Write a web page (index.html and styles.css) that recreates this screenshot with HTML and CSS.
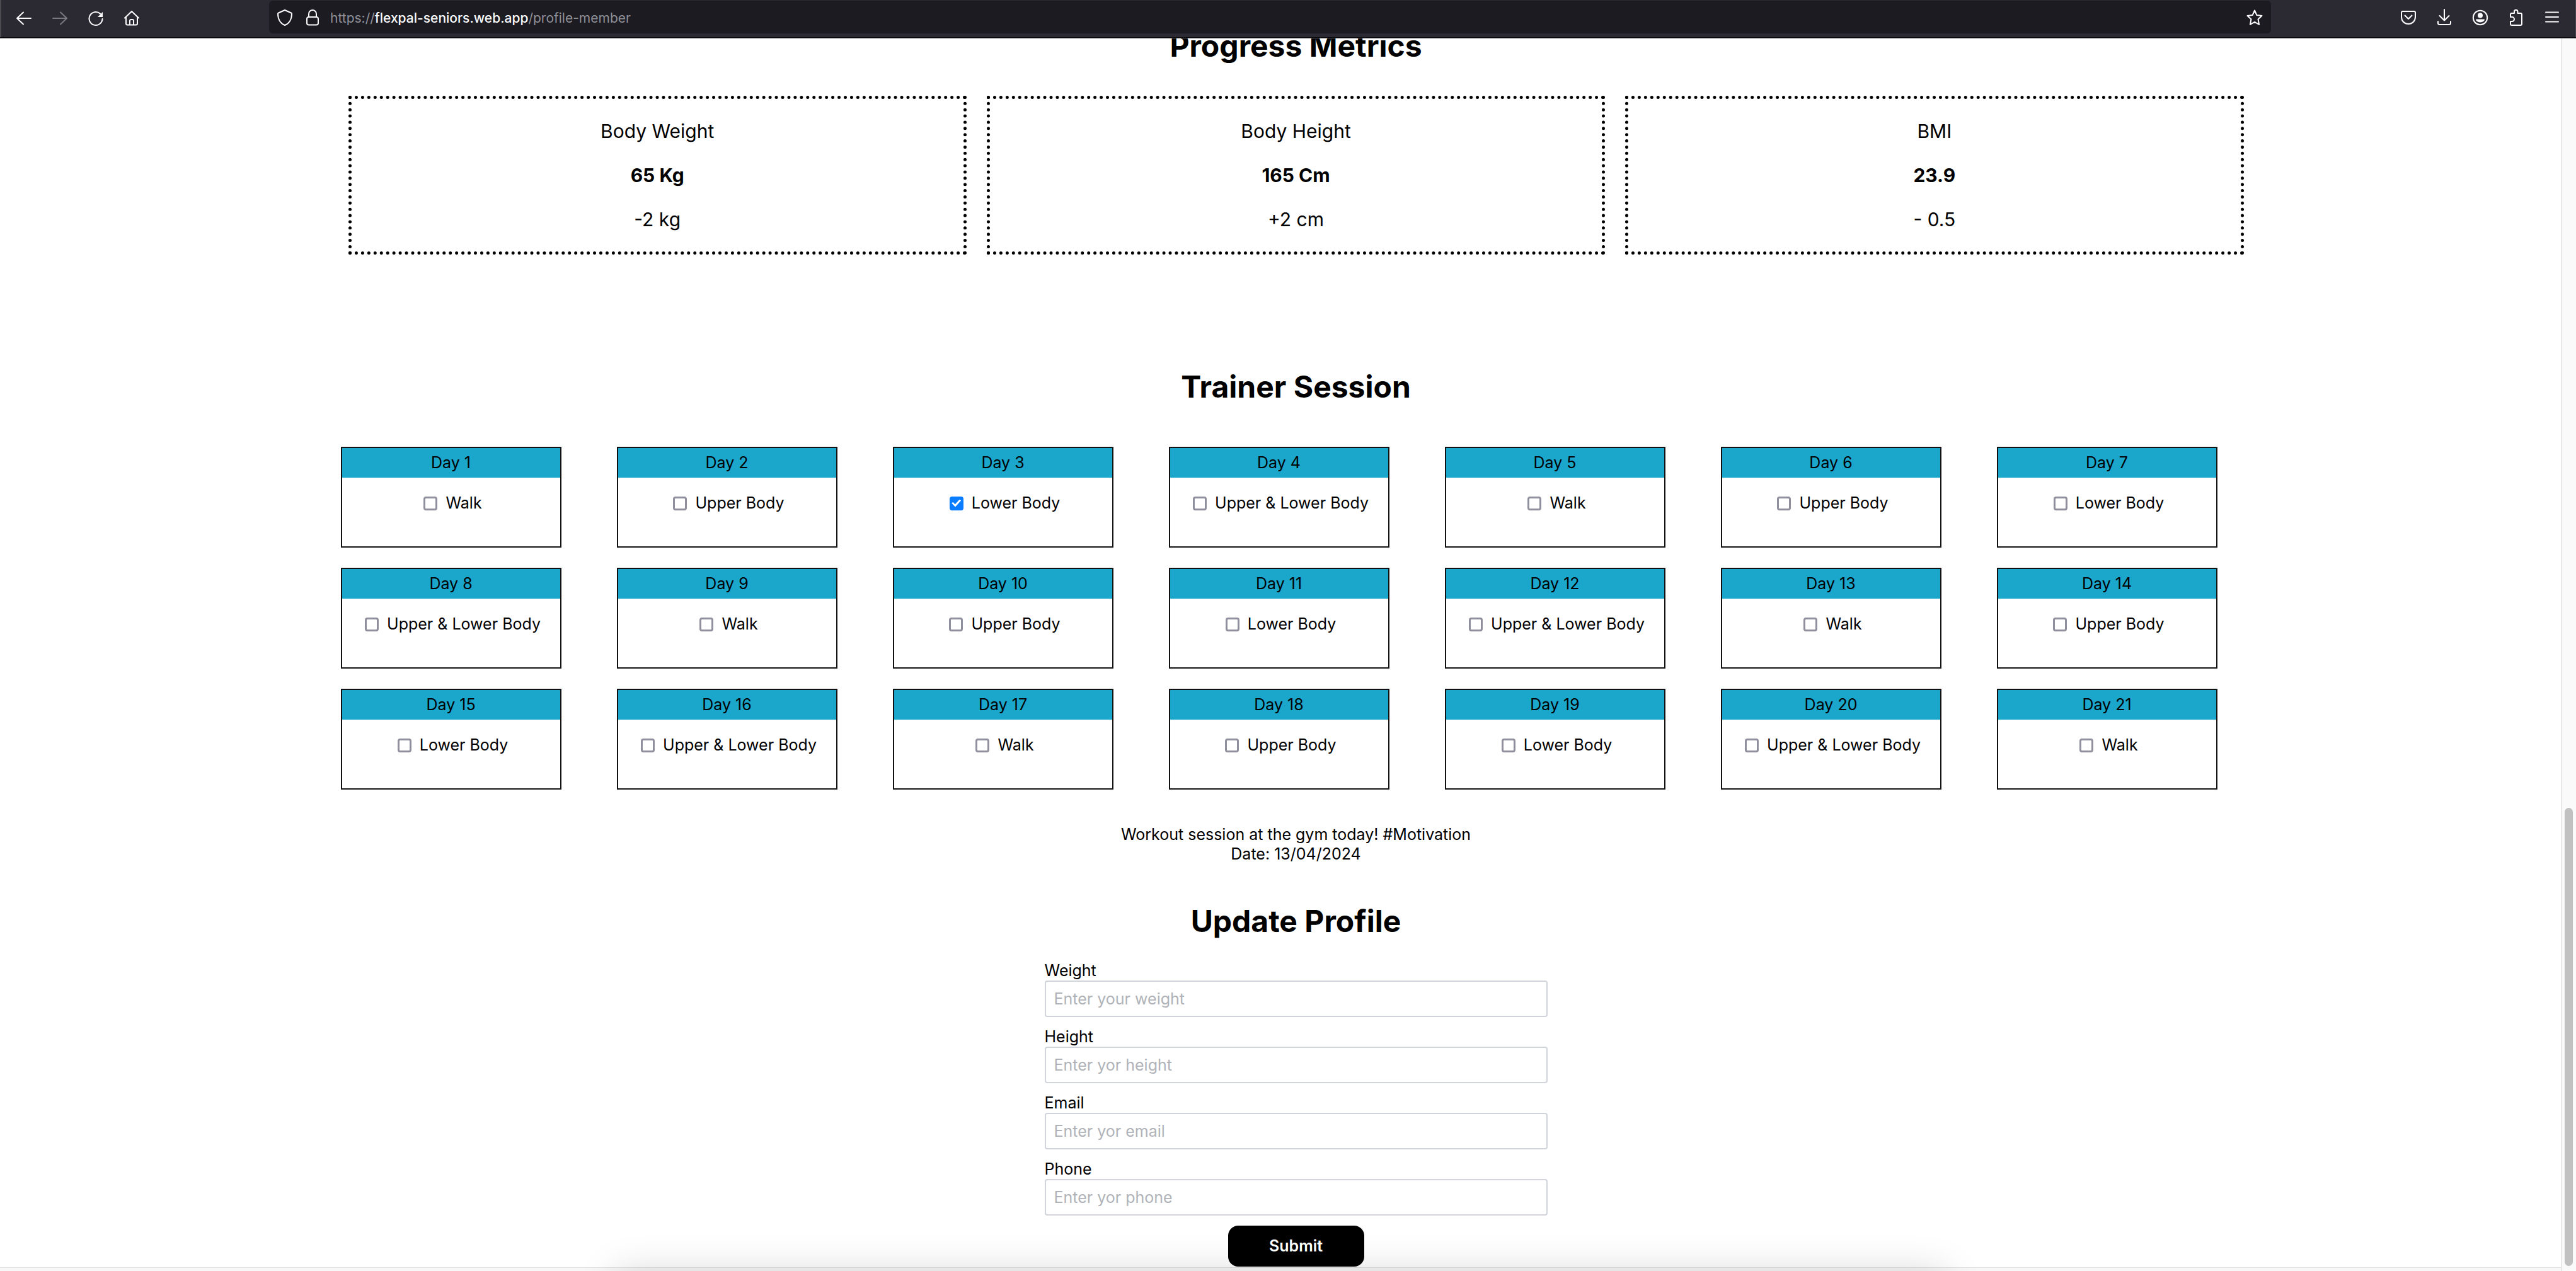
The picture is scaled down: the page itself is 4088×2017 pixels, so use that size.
FILE: index.html
```html
<!DOCTYPE html>
<html lang="en">
<head>
<meta charset="utf-8">
<title>FlexPal Seniors</title>
<link rel="stylesheet" href="styles.css">
</head>
<body>
<div class="browser">
  <header class="toolbar">
    <nav class="toolbar-nav" aria-label="Browser">
      <button class="tool" type="button" aria-label="Back"><svg class="icon" viewBox="0 0 32 32"><path d="M27 16H5M15 6.500L5 16l10 9.500"/></svg></button>
      <button class="tool tool-off" type="button" aria-label="Forward" disabled><svg class="icon" viewBox="0 0 32 32"><path d="M5 16h22M17 6.500L27 16l-10 9.500"/></svg></button>
      <button class="tool" type="button" aria-label="Reload"><svg class="icon" viewBox="0 0 32 32"><path d="M26.500 17A10.500 10.500 0 1 1 23 8.700"/><path class="fill" d="M27 6v8h-8z"/></svg></button>
      <button class="tool" type="button" aria-label="Home"><svg class="icon" viewBox="0 0 32 32"><path d="M5 15.500L16 5l11 10.500M7 14v10.500q0 2 2 2h14q2 0 2-2V14M13 26v-6q0-2 2-2h2q2 0 2 2v6"/></svg></button>
    </nav>
    <div class="address">
      <svg class="icon" viewBox="0 0 32 32"><path d="M16 4l10 4.500q1 .5 1 1.500c0 9-4.500 15.500-11 18C9.500 25.500 5 19 5 10q0-1 1-1.500z"/></svg>
      <svg class="icon" viewBox="0 0 32 32"><rect x="7" y="15" width="18" height="12.500" rx="3"/><path d="M10 15v-5a6 6 0 0 1 12 0v5"/></svg>
      <span class="url">https://<b class="host">flexpal-seniors.web.app</b>/profile-member</span>
      <button class="tool" type="button" aria-label="Bookmark"><svg class="icon" viewBox="0 0 32 32"><path d="M16 4.500l3.400 7.600 8.100.9-6 5.500 1.600 8.500-7.100-4.200L8.900 27l1.600-8.500-6-5.500 8.100-.9z"/></svg></button>
    </div>
    <div class="toolbar-end">
      <button class="tool" type="button" aria-label="Pocket"><svg class="icon" viewBox="0 0 32 32"><path d="M7 6h18q2 0 2 2v7c0 6-4.500 11-11 11S5 21 5 15V8q0-2 2-2zM10.500 12.500L16 18l5.500-5.500"/></svg></button>
      <button class="tool" type="button" aria-label="Downloads"><svg class="icon" viewBox="0 0 32 32"><path d="M16 3v17.500M8.500 13l7.500 7.500 7.500-7.500M6 22v2.500q0 2.500 2.500 2.500h15q2.500 0 2.500-2.500V22"/></svg></button>
      <button class="tool" type="button" aria-label="Account"><svg class="icon" viewBox="0 0 32 32"><circle cx="16" cy="16" r="11.200"/><circle class="fill" cx="16" cy="12.500" r="4"/><path class="fill" d="M9 18.500h14a7 5 0 0 1-14 0z"/></svg></button>
      <button class="tool" type="button" aria-label="Extensions"><svg class="icon" viewBox="0 0 32 32"><path d="M7 15v-4q0-2 2-2h4V6.500a2.700 2.700 0 0 1 5.400 0V9H23q2 0 2 2v15q0 2-2 2H9q-2 0-2-2v-4h2.500a3.500 3.500 0 0 0 0-7z"/></svg></button>
      <button class="tool" type="button" aria-label="Menu"><svg class="icon" viewBox="0 0 32 32"><path d="M6 7.500h20M6 15h20M6 22.500h20"/></svg></button>
    </div>
  </header>
  <div class="viewport">
    <main class="page">
      <section class="metrics">
        <h2 class="title">Progress Metrics</h2>
        <div class="metric-row">
          <article class="metric"><p>Body Weight</p><p><b>65 Kg</b></p><p>-2 kg</p></article>
          <article class="metric"><p>Body Height</p><p><b>165 Cm</b></p><p>+2 cm</p></article>
          <article class="metric"><p>BMI</p><p><b>23.9</b></p><p>- 0.5</p></article>
        </div>
      </section>
      <section class="sessions">
        <h2 class="title">Trainer Session</h2>
        <div class="days">
          <article class="day"><h3 class="day-name">Day 1</h3><label class="task"><input class="tick" type="checkbox">Walk</label></article>
          <article class="day"><h3 class="day-name">Day 2</h3><label class="task"><input class="tick" type="checkbox">Upper Body</label></article>
          <article class="day"><h3 class="day-name">Day 3</h3><label class="task"><input class="tick" type="checkbox" checked>Lower Body</label></article>
          <article class="day"><h3 class="day-name">Day 4</h3><label class="task"><input class="tick" type="checkbox">Upper &amp; Lower Body</label></article>
          <article class="day"><h3 class="day-name">Day 5</h3><label class="task"><input class="tick" type="checkbox">Walk</label></article>
          <article class="day"><h3 class="day-name">Day 6</h3><label class="task"><input class="tick" type="checkbox">Upper Body</label></article>
          <article class="day"><h3 class="day-name">Day 7</h3><label class="task"><input class="tick" type="checkbox">Lower Body</label></article>
          <article class="day"><h3 class="day-name">Day 8</h3><label class="task"><input class="tick" type="checkbox">Upper &amp; Lower Body</label></article>
          <article class="day"><h3 class="day-name">Day 9</h3><label class="task"><input class="tick" type="checkbox">Walk</label></article>
          <article class="day"><h3 class="day-name">Day 10</h3><label class="task"><input class="tick" type="checkbox">Upper Body</label></article>
          <article class="day"><h3 class="day-name">Day 11</h3><label class="task"><input class="tick" type="checkbox">Lower Body</label></article>
          <article class="day"><h3 class="day-name">Day 12</h3><label class="task"><input class="tick" type="checkbox">Upper &amp; Lower Body</label></article>
          <article class="day"><h3 class="day-name">Day 13</h3><label class="task"><input class="tick" type="checkbox">Walk</label></article>
          <article class="day"><h3 class="day-name">Day 14</h3><label class="task"><input class="tick" type="checkbox">Upper Body</label></article>
          <article class="day"><h3 class="day-name">Day 15</h3><label class="task"><input class="tick" type="checkbox">Lower Body</label></article>
          <article class="day"><h3 class="day-name">Day 16</h3><label class="task"><input class="tick" type="checkbox">Upper &amp; Lower Body</label></article>
          <article class="day"><h3 class="day-name">Day 17</h3><label class="task"><input class="tick" type="checkbox">Walk</label></article>
          <article class="day"><h3 class="day-name">Day 18</h3><label class="task"><input class="tick" type="checkbox">Upper Body</label></article>
          <article class="day"><h3 class="day-name">Day 19</h3><label class="task"><input class="tick" type="checkbox">Lower Body</label></article>
          <article class="day"><h3 class="day-name">Day 20</h3><label class="task"><input class="tick" type="checkbox">Upper &amp; Lower Body</label></article>
          <article class="day"><h3 class="day-name">Day 21</h3><label class="task"><input class="tick" type="checkbox">Walk</label></article>
        </div>
        <div class="note"><p>Workout session at the gym today! #Motivation</p><p>Date: 13/04/2024</p></div>
      </section>
      <section class="update">
        <h2 class="title">Update Profile</h2>
        <form class="form">
          <div class="field"><label for="weight">Weight</label><input class="box" id="weight" type="text" placeholder="Enter your weight"></div>
          <div class="field"><label for="height">Height</label><input class="box" id="height" type="text" placeholder="Enter yor height"></div>
          <div class="field"><label for="email">Email</label><input class="box" id="email" type="email" placeholder="Enter yor email"></div>
          <div class="field"><label for="phone">Phone</label><input class="box" id="phone" type="tel" placeholder="Enter yor phone"></div>
          <button class="submit" type="submit">Submit</button>
        </form>
      </section>
    </main>
    <div class="scroll-track" aria-hidden="true"><div class="scroll-thumb"></div></div>
  </div>
</div>
</body>
</html>
```

FILE: styles.css
```css
*, *::before, *::after { box-sizing: border-box; }

body {
  margin: 0;
  background: #fff;
  color: #000;
  font-family: Inter, "Liberation Sans", sans-serif;
  font-size: 25px;
  line-height: 31px;
}

h2, h3, p { margin: 0; }
button, input { font: inherit; }

.browser {
  display: flex;
  flex-direction: column;
  height: 100vh;
  overflow: hidden;
}

/* Browser toolbar */
.toolbar {
  position: relative;
  z-index: 1;
  flex: none;
  display: flex;
  height: 61px;
  padding: 1px 22px 7px;
  background: #2b2a33;
  border-bottom: 1px solid #58575c;
  box-shadow: inset 0 -1px #0c0c0d, inset 2px 0 #4a4a4f, inset -1px 0 #4a4a4f;
}
.toolbar-nav {
  display: flex;
  align-items: center;
  gap: 25px;
  width: 405px;
  padding-top: 3px;
}
.tool {
  display: flex;
  padding: 0;
  border: 0;
  background: none;
  color: #fbfbfe;
}
.tool-off { color: #7a7980; }
.icon {
  flex: none;
  width: 32px;
  height: 32px;
  fill: none;
  stroke: currentColor;
  stroke-width: 2;
  stroke-linecap: round;
  stroke-linejoin: round;
}
.icon .fill { fill: currentColor; stroke: none; }
.address {
  flex: 1;
  display: flex;
  align-items: center;
  gap: 12px;
  padding: 2px 10px 0 9px;
  border-radius: 6px;
  background: #1c1b22;
  color: #fbfbfe;
}
.url {
  flex: 1;
  color: #8f8f96;
  font-size: 21px;
}
.host { color: #fbfbfe; font-weight: 500; }
.toolbar-end {
  display: flex;
  align-items: center;
  justify-content: flex-end;
  gap: 25px;
  width: 462px;
  padding-top: 2px;
}

/* Page area and scrollbar */
.viewport {
  flex: 1;
  min-height: 0;
  display: flex;
}
.page {
  position: relative;
  z-index: 0;
  flex: 1;
  display: flex;
  flex-direction: column;
  justify-content: flex-end;
  padding: 0 11.9% 7px 13.1%;
  text-align: center;
  background:
    linear-gradient(#e2e2e2, #e2e2e2) 0 calc(100% - 5px) / 100% 1px no-repeat,
    linear-gradient(#f8f8f8, #f8f8f8) 0 100% / 100% 5px no-repeat;
}
/* Soft shadow cast from the bottom edge of the window */
.page::after {
  content: "";
  position: absolute;
  z-index: -1;
  top: 100%;
  left: 24%;
  right: 24%;
  height: 60px;
  box-shadow: 0 0 60px rgba(0, 0, 0, .15);
}
.scroll-track {
  flex: none;
  width: 24px;
  padding: 1221px 5px 8px 4px;
  border-left: 2px solid #e8e8e8;
  background: #fafafa;
}
.scroll-thumb {
  height: 100%;
  border-radius: 8px;
  background: #c1c1c1;
}

.title {
  font-size: 48px;
  font-weight: 700;
  line-height: 62px;
}

/* Progress metrics */
.metric-row {
  display: grid;
  grid-template-columns: repeat(3, 1fr);
  gap: 32px;
  padding: 48px 17px 0;
}
.metric {
  display: flex;
  flex-direction: column;
  gap: 32px;
  padding: 32px;
  border: 5px dotted #000;
  font-size: 30px;
  line-height: 38px;
}

/* Trainer sessions */
.sessions { padding-top: 179px; }
.days {
  display: grid;
  grid-template-columns: repeat(7, 1fr);
  gap: 32px 88px;
  padding: 64px 59px 0 5px;
}
.day {
  height: 160px;
  border: 2px solid #111;
}
.day-name {
  padding: 8px 0;
  background: #1ba6cb;
  font-size: 25px;
  font-weight: 400;
}
.task {
  display: flex;
  justify-content: center;
  align-items: center;
  gap: 13px;
  padding: 25px 0 0 6px;
}
.tick {
  appearance: none;
  display: grid;
  place-items: center;
  width: 22px;
  height: 22px;
  margin: 0;
  border: 3px solid #8f8f9d;
  border-radius: 4px;
  background: #fff;
}
.tick:checked {
  border-color: #0a7cff;
  background: #0a7cff;
}
.tick:checked::before {
  content: "";
  width: 15px;
  height: 12px;
  background: #fff;
  clip-path: polygon(0 50%, 14% 36%, 36% 64%, 84% 0, 100% 14%, 38% 100%);
}
.note { padding-top: 56px; }

/* Update profile form */
.update { padding-top: 60px; }
.form {
  display: flex;
  flex-direction: column;
  align-items: center;
  gap: 16px;
  padding-top: 32px;
}
.field {
  display: flex;
  flex-direction: column;
  width: 798px;
  text-align: left;
}
.box {
  height: 58px;
  padding: 0 13px;
  border: 2px solid #d1d5db;
  border-radius: 4px;
  background: #fff;
  color: #000;
}
.box::placeholder { color: #b0b3b8; opacity: 1; }
.submit {
  width: 216px;
  height: 65px;
  padding: 0;
  border: 0;
  border-radius: 16px;
  background: #000;
  color: #fff;
  font-weight: 600;
}
```
